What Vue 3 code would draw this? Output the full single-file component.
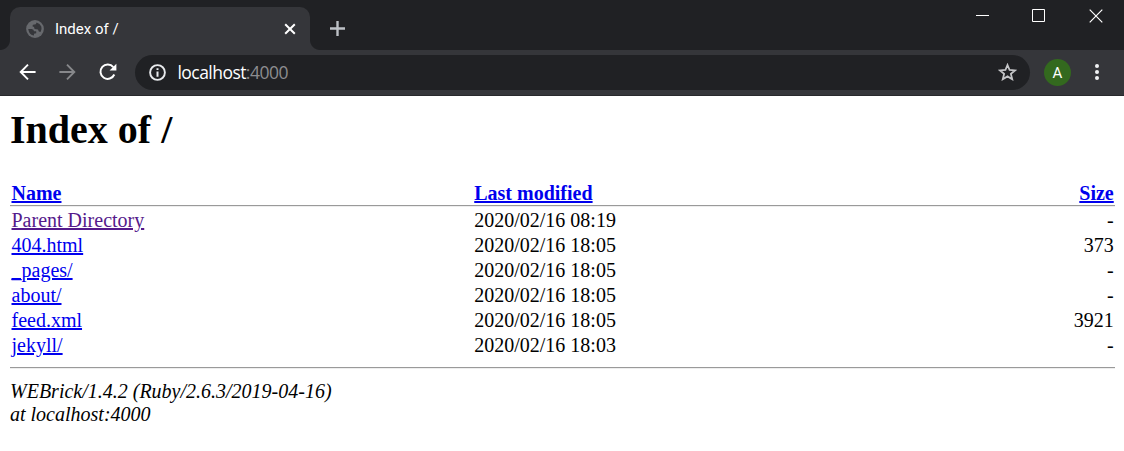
<script setup>
const rows = [
  { name: 'Parent Directory', date: '2020/02/16 08:19', size: '-', visited: true },
  { name: '404.html', date: '2020/02/16 18:05', size: '373' },
  { name: '_pages/', date: '2020/02/16 18:05', size: '-' },
  { name: 'about/', date: '2020/02/16 18:05', size: '-' },
  { name: 'feed.xml', date: '2020/02/16 18:05', size: '3921' },
  { name: 'jekyll/', date: '2020/02/16 18:03', size: '-' },
]
</script>

<template>
  <div class="window">
    <header class="strip">
      <div class="tab">
        <svg class="globe" width="18" height="18" viewBox="0 0 18 18">
          <circle cx="9" cy="9" r="8.9" fill="#67696d" />
          <path d="M2.2 9 L5.6 9 Q8 9.2 8 11.2 L10.2 11.3 V13.2 L8 13.8 V15.6 Q3.2 15 2.2 9Z M10.6 2.4 Q14 3.2 15.3 6.5 Q16.2 9.4 14.6 12 L12.8 11.4 L12 9.4 L8.6 9 L8 7 L6.4 6.2 L7 4.7 L9.8 4.2Z" fill="#35363a" />
        </svg>
        <span class="title">Index of /</span>
        <svg class="close" width="12" height="12" viewBox="0 0 12 12" stroke="#fff" stroke-width="2"><path d="M1.2 1.2l9.6 9.6M10.8 1.2l-9.6 9.6" /></svg>
      </div>
      <svg class="plus" width="15" height="15" viewBox="0 0 15 15" stroke="#bdc1c6" stroke-width="2.4"><path d="M7.5 0v15M0 7.5h15" /></svg>
      <div class="controls">
        <svg width="13" height="13" viewBox="0 0 13 13" stroke="#fff"><path d="M0 6.5h13" /></svg>
        <svg width="13" height="13" viewBox="0 0 13 13" stroke="#fff" fill="none"><path d="M.5.5h12v12h-12z" /></svg>
        <svg width="14" height="14" viewBox="0 0 14 14" stroke="#fff" stroke-width="1.2"><path d="M.7.7l12.6 12.6M13.3.7L.7 13.3" /></svg>
      </div>
    </header>
    <nav class="toolbar">
      <svg class="back" width="18" height="18" viewBox="0 0 18 18" fill="none" stroke="#fff" stroke-width="1.9"><path d="M16.6 9H2M9 1.7L1.7 9 9 16.3" /></svg>
      <svg class="forward" width="18" height="18" viewBox="0 0 18 18" fill="none" stroke="#87888b" stroke-width="1.9"><path d="M.4 9h15M8 1.7L15.3 9 8 16.3" /></svg>
      <svg class="reload" width="18" height="18" viewBox="0 0 18 18"><path d="M14.3 4.2A7.2 7.2 0 1 0 15.3 11.5" fill="none" stroke="#fff" stroke-width="2" /><path d="M17.4.8v6.8h-6.8z" fill="#fff" /></svg>
      <div class="omnibox">
        <svg class="info" width="17" height="17" viewBox="0 0 17 17"><circle cx="8.5" cy="8.5" r="7.4" fill="none" stroke="#e8eaed" stroke-width="1.9" /><path d="M7.5 4.2h2V6h-2zM7.5 7.5h2v5.2h-2z" fill="#e8eaed" /></svg>
        <span class="url">localhost<span class="port">:4000</span></span>
        <svg class="star" width="19" height="18" viewBox="0 0 19 18"><path d="M9.5 2l2.1 5 5.4.4-4.1 3.5 1.3 5.3-4.7-2.8-4.7 2.8 1.3-5.3L2 7.4 7.4 7z" fill="none" stroke="#c4c5c7" stroke-width="1.8" /></svg>
      </div>
      <div class="avatar">A</div>
      <svg class="menu" width="4" height="16" viewBox="0 0 4 16" fill="#f1f3f4"><circle cx="2" cy="2" r="2" /><circle cx="2" cy="8" r="2" /><circle cx="2" cy="14" r="2" /></svg>
    </nav>
    <main class="page">
      <h1>Index of /</h1>
      <div class="row head">
        <a>Name</a><a>Last modified</a><a>Size</a>
      </div>
      <div class="list">
        <div v-for="row in rows" :key="row.name" class="row">
          <a :class="{ visited: row.visited }">{{ row.name }}</a>
          <span>{{ row.date }}</span>
          <span>{{ row.size }}</span>
        </div>
      </div>
      <address>WEBrick/1.4.2 (Ruby/2.6.3/2019-04-16)<br>at localhost:4000</address>
    </main>
  </div>
</template>

<style>
body { margin: 0; background: #fff; }
</style>

<style scoped>
.window { width: 1124px; height: 451px; overflow: hidden; background: #fff; }
svg { display: block; flex: none; }
.strip { display: flex; height: 50px; background: #202124; box-sizing: border-box; padding: 7px 0 0 10px; }
.tab {
  position: relative; display: flex; align-items: center; width: 300px; height: 43px;
  box-sizing: border-box; padding: 0 14px 0 16px; background: #35363a; border-radius: 10px 10px 0 0;
}
.tab::before, .tab::after { content: ""; position: absolute; bottom: 0; width: 10px; height: 10px; }
.tab::before { left: -10px; background: radial-gradient(circle at 0 0, #202124 9.5px, #35363a 10.5px); }
.tab::after { right: -10px; background: radial-gradient(circle at 100% 0, #202124 9.5px, #35363a 10.5px); }
.title { margin-left: 11px; color: #fff; font: 15px/20px Roboto, sans-serif; }
.close { margin-left: auto; }
.plus { margin: 14px 0 0 20px; }
.controls { display: flex; gap: 43px; margin: 2px 21px 0 auto; }
.controls svg:last-child { margin-left: 1px; }
.toolbar { display: flex; align-items: center; height: 46px; box-sizing: border-box; padding: 0 25px 1px 18.5px; background: #35363a; border-bottom: 1px solid #28292c; }
.forward { margin-left: 22.5px; }
.reload { margin-left: 22px; }
.omnibox { display: flex; align-items: center; width: 895px; height: 35px; box-sizing: border-box; margin-left: 18px; padding: 0 13px 0 14px; background: #202124; border-radius: 18px; }
.url { margin-left: 11.5px; color: #fff; font: 17.5px/24px "Open Sans", sans-serif; letter-spacing: -.55px; }
.port { color: #8c8d90; letter-spacing: -.5px; }
.star { margin-left: auto; }
.avatar { width: 27px; height: 27px; margin-left: 14px; border-radius: 50%; background: #33691e; color: #fff; font: 15px/28px Roboto, sans-serif; text-align: center; }
.menu { margin-left: auto; }
.page { padding: 11px 9px 0 10px; color: #000; font: 20px/25px "Liberation Serif", "Times New Roman", serif; }
h1 { margin: 0; font-size: 40px; line-height: 46px; font-weight: bold; }
.row { display: grid; grid-template-columns: 462.75px 1fr 100px; padding: 0 1.25px 0 1.5px; }
.row > :last-child { justify-self: end; }
.head, .list { border-bottom: 1px solid #9a9a9a; box-shadow: 0 1px #eee; }
.head { margin-top: 28px; height: 24px; font-weight: bold; }
a { justify-self: start; color: #0000ee; text-decoration: underline; }
.visited { color: #551a8b; }
.list { padding: 2px 0 9px; }
address { margin-top: 12px; line-height: 23px; font-style: italic; }
</style>
